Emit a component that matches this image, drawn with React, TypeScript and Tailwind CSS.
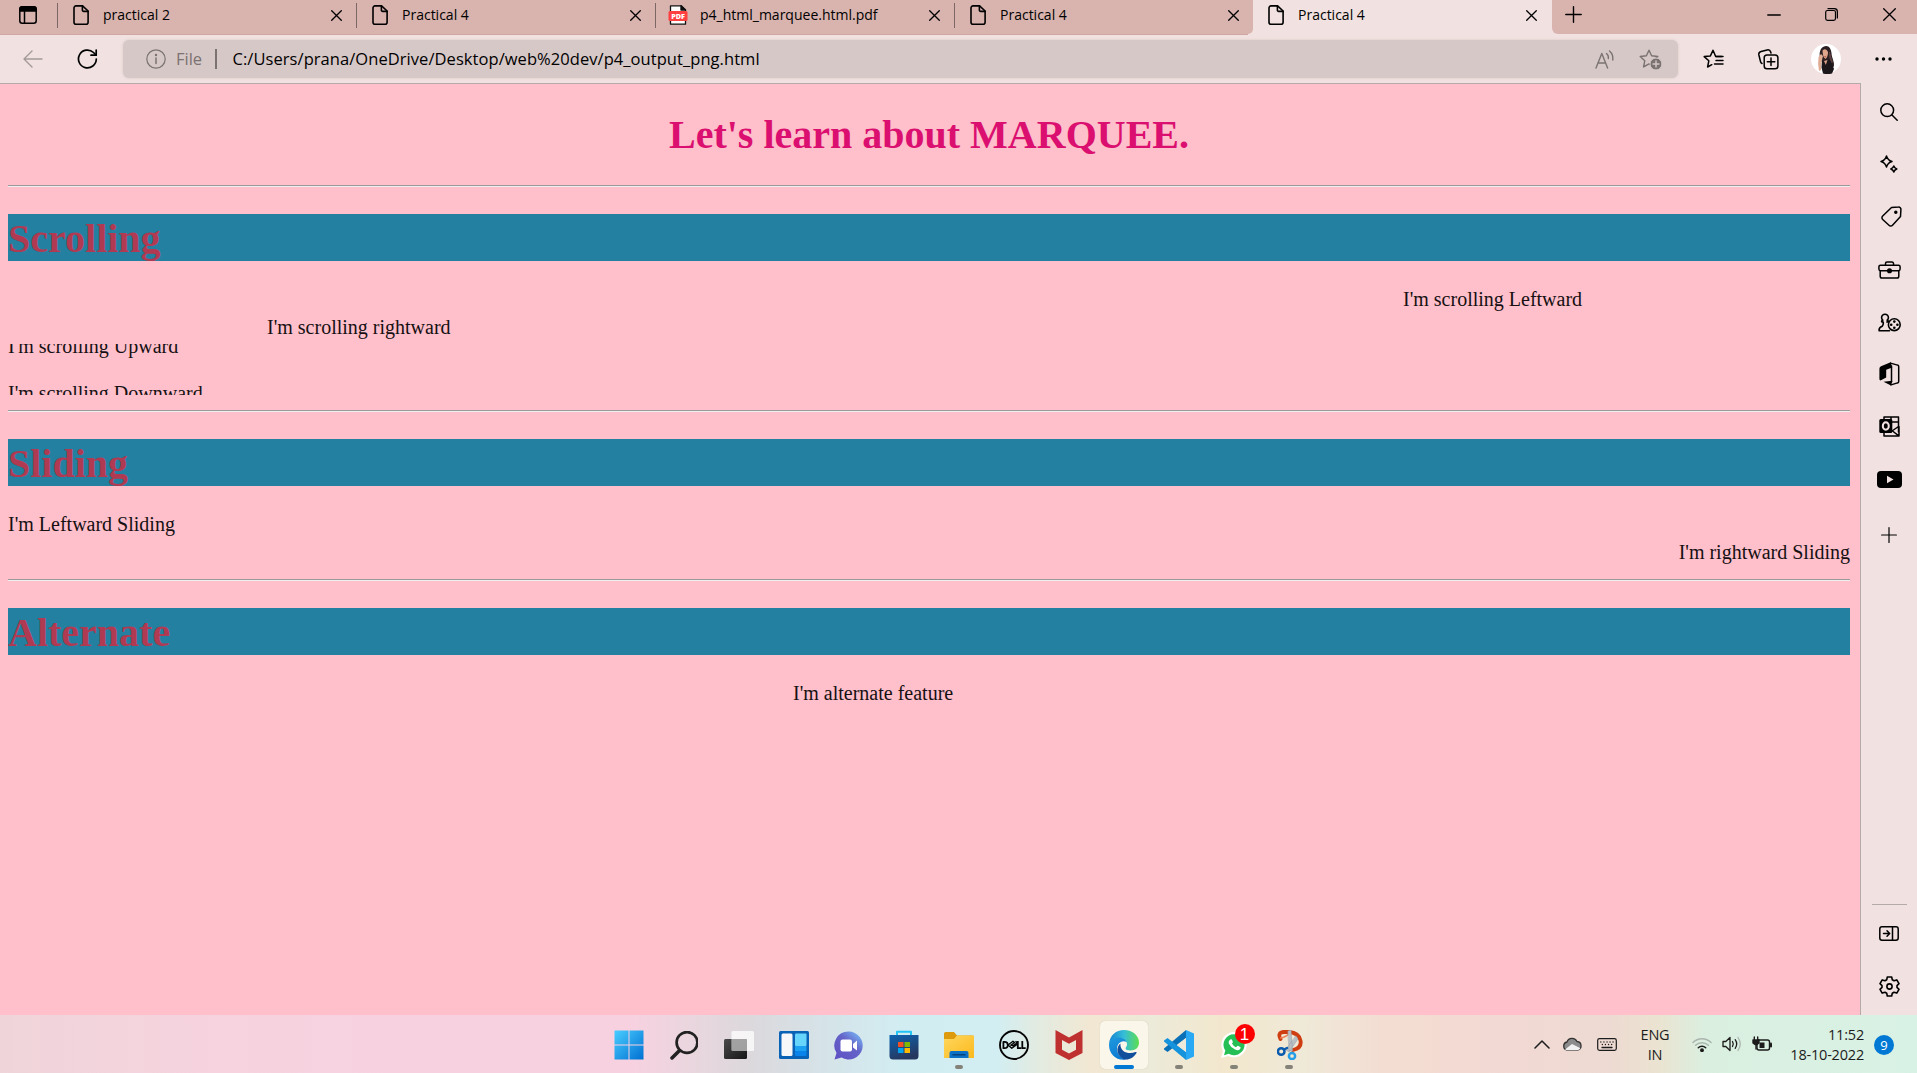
import type { ReactNode } from 'react';

function Svg({ w = 20, h, box, sw = 1.4, className = '', children }: { w?: number; h?: number; box?: string; sw?: number; className?: string; children: ReactNode }) {
  const hh = h ?? w;
  return (
    <svg width={w} height={hh} viewBox={box ?? `0 0 ${w} ${hh}`} fill="none" stroke="currentColor" strokeWidth={sw} strokeLinecap="round" strokeLinejoin="round" className={`block shrink-0 ${className}`}>
      {children}
    </svg>
  );
}

const DocIcon = () => (
  <Svg w={16} h={20} sw={1.6}>
    <path d="M3 .9h6.6L15.1 6v11.2a2 2 0 0 1-2 2H3a2 2 0 0 1-2-2V2.900a2 2 0 0 1 2-2z" />
    <path d="M9.400 1v4.200a1.200 1.200 0 0 0 1.200 1.200H15" />
  </Svg>
);

const PdfIcon = () => (
  <Svg w={20} h={20}>
    <path d="M2.500 .8h10.700L17.500 5v14.200h-15z" fill="#fff" stroke="#111" strokeWidth="1.300" />
    <path d="M13 .8V5h4.500z" fill="#111" stroke="#111" />
    <rect x="0.500" y="6" width="19" height="10" rx="1.500" fill="#ff4040" stroke="none" />
    <text x="10" y="13.900" fontSize="7.200" fontWeight="800" fill="#fff" stroke="none" textAnchor="middle" fontFamily="Open Sans, sans-serif">PDF</text>
  </Svg>
);

const Cross = ({ s = 11 }: { s?: number }) => (
  <Svg w={s} sw={1.3}>
    <path d={`M.7 .7L${s - 0.7} ${s - 0.7}M${s - 0.7} .7L.7 ${s - 0.7}`} />
  </Svg>
);

function Tab({ title, pdf, line }: { title: string; pdf?: boolean; line?: boolean }) {
  return (
    <div className="flex h-[35px] w-[299px] shrink-0 items-start">
      <div className={`mt-[5px] flex w-5 shrink-0 justify-center ${pdf ? 'ml-[12px]' : 'ml-[13px]'}`}>{pdf ? <PdfIcon /> : <DocIcon />}</div>
      <div className={`mt-[5px] h-5 grow whitespace-nowrap text-[14px] leading-5 ${pdf ? 'pl-[12px]' : 'pl-[12px]'}`}>{title}</div>
      <div className="mt-[10px]"><Cross /></div>
      <div className={`ml-[14px] mt-[3px] h-[25px] w-px shrink-0 ${line ? 'bg-[#7d6764]' : ''}`} />
    </div>
  );
}

function TabStrip() {
  return (
    <div className="flex h-[35px] border-b border-[#cfa8a3] bg-[#d9b3ae]">
      <div className="flex h-[34px] w-[58px] shrink-0 items-start justify-between">
        <Svg w={18} h={18} className="ml-[19px] mt-[6px]" sw={1.5}>
          <rect x=".8" y=".8" width="16.400" height="16.400" rx="2.500" />
          <path d="M1 5V3a2 2 0 0 1 2-2h12a2 2 0 0 1 2 2v2z" fill="currentColor" />
          <path d="M5.500 5v12" />
        </Svg>
        <div className="mt-[3px] h-[25px] w-px bg-[#7d6764]" />
      </div>
      <Tab title="practical 2" line />
      <Tab title="Practical 4" line />
      <Tab title="p4_html_marquee.html.pdf" pdf line />
      <div className="w-[293px] shrink-0"><Tab title="Practical 4" /></div>
      <div className="flex h-[35px] shrink-0 bg-[#f1e2e1]">
        <div className="h-[34px] w-[5px] rounded-br-md bg-[#d9b3ae]" />
        <div className="w-[299px]"><Tab title="Practical 4" /></div>
      </div>
      <div className="h-[35px] grow bg-[#f1e2e1]">
        <div className="flex h-[34px] items-start rounded-bl-md bg-[#d9b3ae] pl-[13px]">
          <Svg w={17} className="mt-[6px]"><path d="M8.500 .8v15.400M.8 8.500h15.400" /></Svg>
          <div className="grow" />
          <Svg w={14} h={2} className="mr-[44px] mt-[14px]"><path d="M.8 1h12.400" /></Svg>
          <Svg w={13} className="mr-[45px] mt-[8px]" sw={1.2}>
            <rect x=".7" y="2.500" width="9.800" height="9.800" rx="1.800" />
            <path d="M3 .7h6.500a3 3 0 0 1 2.900 3V10" />
          </Svg>
          <div className="mr-[21px] mt-[8px]"><Cross s={13} /></div>
        </div>
      </div>
    </div>
  );
}

const star = 'M10 1.200l2.600 5.600 6.200.7-4.600 4.200 1.200 6.200L10 14.900l-5.400 3 1.200-6.200L1.200 7.500l6.200-.7z';

function Toolbar() {
  return (
    <div className="flex h-[48px] items-center bg-[#f1e2e1]">
      <Svg w={20} h={18} className="ml-[23px] text-[#a39a99]"><path d="M9 1L1 9l8 8M1 9h18" /></Svg>
      <Svg w={21} h={20} className="ml-[34px]" sw={1.700}>
        <path d="M19.300 10a8.900 8.900 0 1 1-2.800-6.500L19 6" /><path d="M19.200 1v5.200H14" />
      </Svg>
      <div className="ml-[25px] flex h-[38px] w-[1555px] shrink-0 items-center rounded-[6px] bg-[#d6c8c7] shadow-[0_0_3px_#d6c8c7]">
        <Svg w={20} className="ml-[23px] text-[#7b7272]" sw={1.2}>
          <circle cx="10" cy="10" r="9.200" /><path d="M10 9v5.500" strokeWidth="1.500" /><circle cx="10" cy="6" r=".6" fill="currentColor" />
        </Svg>
        <span className="ml-[10px] w-[30px] whitespace-nowrap text-[16.500px] text-[#7b7272]">File</span>
        <div className="ml-[9px] h-[20px] w-[1.500px] bg-[#7b7272]" />
        <span className="ml-[16px] whitespace-nowrap text-[16.500px] tracking-[0.060px]">C:/Users/prana/OneDrive/Desktop/web%20dev/p4_output_png.html</span>
        <div className="grow" />
        <Svg w={20} h={19} className="mr-[24px] text-[#7b7272]" sw={1.400}>
          <path d="M1 18L6.800 3.500 12.600 18M3.200 13h7.200" /><path d="M11.500 3.500q2.400 2 1.800 5M14.500 1q4 3.500 3.300 9" />
        </Svg>
        <Svg w={23} h={21} className="mr-[16px] text-[#7b7272]" sw={1.400}>
          <path d={star} /><circle cx="17" cy="15" r="6" fill="currentColor" stroke="#d6c8c7" strokeWidth="1" /><path d="M17 12v6M14 15h6" stroke="#d6c8c7" />
        </Svg>
      </div>
      <Svg w={21} h={20} className="ml-[25px]" sw={1.500}>
        <path d="M18.500 7.500h-5.800L10 1.200 7.400 6.900l-6.200.7 4.600 4.200-1.200 6.200 4.200-2.300" /><path d="M13 11.500h7M11.500 15h8.500M13 7.600h7" />
      </Svg>
      <Svg w={21} className="ml-[34px]" sw={1.500}>
        <path d="M4 14.500a3 3 0 0 1-1.500-2L.9 6a3 3 0 0 1 2.200-3.500l6-1.500A3 3 0 0 1 12.700 3l.3 1" /><rect x="6.200" y="6" width="13.700" height="13.700" rx="2.800" /><path d="M13 9v7.500M9.300 12.800h7.500" />
      </Svg>
      <Svg w={30} className="ml-[32px]">
        <circle cx="15" cy="15" r="15" fill="#fff" stroke="none" />
        <g stroke="none">
          <path d="M9 14c-1-5 0-9 3-11 5-3 8 1 8.500 6 0 5 4 10 2 14l-9 1z" fill="#2b1f21" />
          <path d="M11.500 6.500q3.500-3 5.500 1.500 0 5-2.500 7-3-2-3-8.500z" fill="#e0a68c" />
          <path d="M7.500 13l2.500-3 2 2-1.500 6-.5 8-2 1q-1.500-7-.5-14z" fill="#e0ab93" />
          <path d="M11 17l3 1 5-3 4 10-2 4.500q-5 1-9 0l-1.500-6z" fill="#1b171b" />
          <path d="M13 17l1.800 4 1.700-5z" fill="#dba087" />
          <path d="M13 12q1.500 1 2.500-.5l-.7 1.700h-1z" fill="#a9453f" />
          <path d="M18 8q-.5 6 2.500 11l1.500-1q-2-5-3-10z" fill="#5b3f40" />
        </g>
      </Svg>
      <Svg w={17} h={4} className="ml-[34px]"><g fill="currentColor" stroke="none"><circle cx="2" cy="2" r="1.700" /><circle cx="8.500" cy="2" r="1.700" /><circle cx="15" cy="2" r="1.700" /></g></Svg>
    </div>
  );
}

function Heading({ children }: { children: ReactNode }) {
  return <h1 className="mt-[27px] h-[47px] bg-[#2380a1] text-[40px] font-bold leading-[49px] text-[#b03a52]">{children}</h1>;
}

const Rule = ({ mt }: { mt: string }) => <div className={`${mt} h-[2px] border-b border-t border-b-[#eeeeee] border-t-[#9a9a9a]`} />;

function Page() {
  return (
    <main className="h-full w-[1861px] shrink-0 border-r border-t border-[#b5aaaa] bg-[#ffbfcb] pl-2 pr-[10px] font-['Liberation_Serif',serif] text-[20px] text-[#151012]">
      <h1 className="mt-[27px] h-[47px] text-center text-[40px] font-bold leading-[47px] text-[#db0f70]">Let's learn about MARQUEE.</h1>
      <Rule mt="mt-[27px]" />
      <Heading>Scrolling</Heading>
      <div className="mt-[27px] h-[28px] pl-[1395px] leading-[22px]">I'm scrolling Leftward</div>
      <div className="h-[28px] pl-[259px] leading-[22px]">I'm scrolling rightward</div>
      <div className="h-[26px] overflow-hidden"><div className="-mt-[9px] leading-[22px]">I'm scrolling Upward</div></div>
      <div className="h-[25px] overflow-hidden"><div className="mt-[11px] leading-6">I'm scrolling Downward</div></div>
      <Rule mt="mt-[15px]" />
      <Heading>Sliding</Heading>
      <div className="mt-[27px] h-[28px] leading-[22px]">I'm Leftward Sliding</div>
      <div className="h-[28px] text-right leading-[22px]">I'm rightward Sliding</div>
      <Rule mt="mt-[10px]" />
      <Heading>Alternate</Heading>
      <div className="mt-[27px] h-[28px] pl-[785px] leading-[22px]">I'm alternate feature</div>
    </main>
  );
}

function Side({ h, children }: { h: string; children: ReactNode }) {
  return <div className={`flex shrink-0 items-center justify-center ${h}`}>{children}</div>;
}

function Sidebar() {
  return (
    <aside className="flex grow flex-col bg-[#f1e2e1] pt-[2px]">
      <Side h="h-[53px]"><Svg w={18} sw={1.500}><circle cx="7.200" cy="7.200" r="6.400" /><path d="M12 12l5.200 5.200" /></Svg></Side>
      <Side h="h-[52px]">
        <Svg w={18} sw={1.500}><path d="M6.500 1q1.200 4.300 5.500 5.500-4.300 1.200-5.500 5.500Q5.300 7.700 1 6.500 5.300 5.300 6.500 1zM13.800 11q.7 2.300 3 3-2.300.7-3 3-.7-2.300-3-3 2.300-.7 3-3z" /></Svg>
      </Side>
      <Side h="h-[53px]">
        <Svg w={21} className="ml-[4px]" sw={1.500}><path d="M10.500 1.500l7-.4a2.200 2.200 0 0 1 2.400 2.400l-.4 7-8 8.700a2.400 2.400 0 0 1-3.500 0l-6.300-5.700a2.400 2.400 0 0 1 0-3.500z" /><circle cx="14.800" cy="6.300" r="1" fill="currentColor" /></Svg>
      </Side>
      <Side h="h-[53px]">
        <Svg w={23} h={18} sw={1.500}><path d="M7.500 4V2.500A1.500 1.500 0 0 1 9 1h5a1.500 1.500 0 0 1 1.500 1.500V4" /><rect x=".9" y="4.200" width="21.200" height="5.500" rx="1.600" /><path d="M2.200 10v5.200a1.800 1.800 0 0 0 1.800 1.800h15a1.800 1.800 0 0 0 1.800-1.800V10" /><circle cx="11.500" cy="9.700" r="1.800" fill="currentColor" /></Svg>
      </Side>
      <Side h="h-[52px]">
        <Svg w={23} h={19} sw={1.600}>
          <path d="M11.500 17.800H1.200q-.7-3 3-4.500 1.500-2 1-4.300H3.800q-.6-1.300 1-1.800a3.400 3.400 0 1 1 4.400 0q1.600.5 1 1.800H8.800" /><circle cx="16.300" cy="11.700" r="5.900" fill="#f1e2e1" />
          <g fill="currentColor" stroke="none"><circle cx="16.300" cy="8.600" r="1.300" /><circle cx="13.200" cy="11.700" r="1.300" /><circle cx="19.400" cy="11.700" r="1.300" /><circle cx="16.300" cy="14.800" r="1.300" /></g>
        </Svg>
      </Side>
      <Side h="h-[52px]">
        <Svg w={21} h={24} sw={1.500}>
          <path d="M11.700.2l1.500 5.300-6 2.300v7.700L1.500 18.500Q.4 18.300.4 17V6.800Q.4 5 2 4.300z" fill="currentColor" stroke="none" /><path d="M4.500 19.800l6.500-.7h2.500l-1.500 4.500z" fill="currentColor" stroke="none" /><path d="M11.500 1.100l7 2a1.500 1.500 0 0 1 1.200 1.500v14.800a1.500 1.500 0 0 1-1.200 1.500l-6.500 2M12.500 4v15" />
        </Svg>
      </Side>
      <Side h="h-[53px]">
        <Svg w={21} sw={1.500}>
          <path d="M5 3V.9h14.500V16M12 3.500v4M5 6h14M12 1v5M19.500 10.500L13 15M5 16v4h15v-9.500M13.500 15l6 4.700" /><rect x=".3" y="3" width="13" height="14" rx="1.500" fill="currentColor" stroke="none" /><ellipse cx="6.800" cy="10" rx="3" ry="3.700" fill="currentColor" stroke="#f1e2e1" strokeWidth="2" />
        </Svg>
      </Side>
      <Side h="h-[52px]"><Svg w={25} h={17}><rect width="25" height="17" rx="4" fill="#000" stroke="none" /><path d="M10 4.800l6.500 3.700-6.500 3.700z" fill="#f1e2e1" stroke="none" /></Svg></Side>
      <Side h="h-[60px]"><Svg w={16} className="-ml-px" sw={1.200}><path d="M8 .6v14.800M.6 8h14.800" /></Svg></Side>
      <div className="grow" />
      <div className="mx-auto h-px w-[35px] bg-[#b5aaaa]" />
      <Side h="h-[57px]"><Svg w={20} h={15} sw={1.500}><rect x=".8" y=".8" width="18.400" height="13.400" rx="2.200" /><path d="M13.500 1v13M4.500 7.500h6M8 4.800l2.700 2.700L8 10.200" /></Svg></Side>
      <div className="flex h-[53px] items-center justify-center pb-[5px]">
        <Svg w={21} sw={1.600}>
          <path d="M8.300 1h4.400l.6 2.800 1.700 1 2.800-.9 2.200 3.800-2 1.900v1.800l2 1.900-2.200 3.800-2.800-.9-1.700 1-.6 2.800H8.300l-.6-2.800-1.700-1-2.800.9L1 13.300l2-1.900V9.600L1 7.700l2.200-3.800 2.800.9 1.700-1z" /><circle cx="10.500" cy="10.500" r="2.600" />
        </Svg>
      </div>
    </aside>
  );
}

function TaskItem({ children, dot, active }: { children: ReactNode; dot?: boolean; active?: boolean }) {
  return (
    <div className="flex h-[58px] w-[55px] shrink-0 flex-col items-center pt-[6px]">
      <div className={`flex h-[48px] w-[48px] flex-col items-center rounded-[5px] pt-[9px] ${active ? 'bg-[#fbf6ea] shadow-[0_0_1px_#bdb7a8]' : ''}`}>
        <div className="flex h-[30px] items-center">{children}</div>
        {active && <div className="mt-[5px] h-[4px] w-[20px] shrink-0 rounded-full bg-[#0078d4]" />}
        {dot && <div className="mt-[5px] h-[4px] w-[8px] shrink-0 rounded-full bg-[#858279]" />}
      </div>
    </div>
  );
}

function Taskbar() {
  return (
    <footer className="flex h-[58px] shrink-0 bg-[linear-gradient(90deg,#efd5da_0%,#f5d3de_9%,#f7d1e0_20%,#f7d1e0_33%,#ead6de_36%,#dcd8dc_39%,#d5e3e8_43%,#d2edf2_47%,#d2eef2_52%,#e2ebe2_54%,#f2e7d2_57%,#ecead9_60%,#f3e7cd_64%,#efe9d8_68%,#f3ddd2_72%,#f3d9d3_78%,#eddad2_84%,#ebe3d1_86.5%,#daefe0_89%,#d8f2e5_100%)] text-[#1c1c1c]">
      <div className="w-[601px] shrink-0" />
      <TaskItem>
        <Svg w={30}><defs><linearGradient id="win" x2="1" y2="1"><stop stopColor="#4acdff" /><stop offset="1" stopColor="#0070d2" /></linearGradient></defs><path d="M.5.500h14v14H.5zM15.500.500h14v14h-14zM.5 15.500h14v14H.5zM15.500 15.500h14v14h-14z" fill="url(#win)" stroke="none" /></Svg>
      </TaskItem>
      <TaskItem><Svg w={28} h={29} className="ml-px"><circle cx="17" cy="11.500" r="10.400" stroke="#222" strokeWidth="2.700" /><path d="M9.500 19.500L2 27" stroke="#222" strokeWidth="3.500" /></Svg></TaskItem>
      <TaskItem>
        <Svg w={30}><defs><linearGradient id="tv" x2="1" y2="1"><stop stopColor="#4a4a4a" /><stop offset="1" stopColor="#161616" /></linearGradient></defs><g stroke="none"><rect y="9" width="23" height="20" rx="1.500" fill="url(#tv)" /><rect x="7.500" y="1" width="22.500" height="20" rx="1.500" fill="#fff" opacity=".75" /><rect x="7.500" y="9" width="15.500" height="12" fill="#777" opacity=".5" /></g></Svg>
      </TaskItem>
      <TaskItem>
        <Svg w={30}><g stroke="none"><rect y="1" width="30" height="28" rx="1.500" fill="#0a62b6" /><rect x="2.500" y="3.500" width="11" height="22.500" rx="1.500" fill="#f7f7f9" /><rect x="16" y="3.500" width="11.500" height="12.500" rx="1" fill="#67d5fb" /><rect x="16" y="16" width="11.500" height="5" fill="#1ba0f2" /><rect x="16" y="21" width="11.500" height="5" rx="1" fill="#0a84ea" /></g></Svg>
      </TaskItem>
      <TaskItem>
        <Svg w={29}><defs><linearGradient id="chat" x1=".1" x2=".9" y1="1" y2=".1"><stop stopColor="#6050c4" /><stop offset=".6" stopColor="#6463c8" /><stop offset="1" stopColor="#77b0f2" /></linearGradient></defs><g stroke="none"><path d="M14.500.500a14 14 0 1 1-7 26L.5 28.500 2.500 22A14 14 0 0 1 14.500.500z" fill="url(#chat)" /><rect x="6.500" y="8.500" width="11.500" height="12" rx="2" fill="#fff" /><path d="M19 13l4-3.500v10L19 16.500z" fill="#fff" /></g></Svg>
      </TaskItem>
      <TaskItem>
        <Svg w={30}><defs><linearGradient id="store" y2="1" x2=".4"><stop stopColor="#0d64b2" /><stop offset="1" stopColor="#26375f" /></linearGradient></defs><path d="M8 6V1.800h14V6" stroke="#21c4f5" strokeWidth="2" /><path d="M.5 5h29v21a3.500 3.500 0 0 1-3.500 3.500H4A3.500 3.500 0 0 1 .5 26z" fill="url(#store)" stroke="none" /><g stroke="none"><path d="M9 12h5.500v5H9z" fill="#f25022" /><path d="M15.500 12H21v5h-5.500z" fill="#7fba00" /><path d="M9 18h5.500v5H9z" fill="#00a4ef" /><path d="M15.500 18H21v5h-5.500z" fill="#ffb900" /></g></Svg>
      </TaskItem>
      <TaskItem dot>
        <Svg w={30}><defs><linearGradient id="fold" x2="1" y2="1"><stop stopColor="#ffd75e" /><stop offset="1" stopColor="#fbb91d" /></linearGradient></defs><g stroke="none"><path d="M0 3.500Q0 2 1.500 2H10l3 3.500h15.500Q30 5.500 30 7v6H0z" fill="#dc9a0c" /><path d="M0 9h10l3-3.500h17V28H0z" fill="url(#fold)" /><path d="M5.500 28v-5q0-2 2-2h15q2 0 2 2v5z" fill="#0c70c7" /><rect x="8.500" y="24" width="13" height="1.500" fill="#06427d" /></g></Svg>
      </TaskItem>
      <TaskItem>
        <Svg w={30}><circle cx="15" cy="15" r="14" strokeWidth="1.900" stroke="#050505" /><g stroke="#050505" strokeWidth="1.800" strokeLinecap="butt"><path d="M4.400 11.800v6.400h1.100q3.300 0 3.300-3.200t-3.300-3.200zM18.800 11v7.200h3.400M23.300 11v7.200h3.400" /><path d="M9 15l5-3.700 1.600 1.200-4.200 3.100M9 15l3.800 3.300 5.500-4.100M12.500 14.700l1.500 1.200 4.200-3.100-1.700-1.500" strokeWidth="1.400" /></g></Svg>
      </TaskItem>
      <TaskItem><Svg w={28} h={30}><path d="M.5 0L14 7.500 27.500 0v23L14 30 .5 23zM7 10v9.800l7 3.700 7-3.700V10l-7 3.800z" fill="#bf3030" fillRule="evenodd" stroke="none" /></Svg></TaskItem>
      <TaskItem active>
        <Svg w={30}>
          <defs>
            <linearGradient id="eTop" x1="0" y1=".5" x2="1" y2=".5"><stop stopColor="#1783cf" /><stop offset=".5" stopColor="#35bdd8" /><stop offset="1" stopColor="#5ede4e" /></linearGradient>
            <linearGradient id="eLeft" x2=".4" y2="1"><stop stopColor="#1f9ade" /><stop offset="1" stopColor="#0d7bd2" /></linearGradient>
          </defs>
          <g stroke="none">
            <path d="M0 14C1 5 7 0 15 0c9 0 15 6 15 12.500 0 5-3.500 8-8.500 8-3 0-5-1-5-2.300 0-1 1.500-1.500 1.500-4C18 10.500 14 8 9 8c-4.500 0-8 2.500-9 6z" fill="url(#eTop)" />
            <path d="M0 15C0 10 4 7.500 9 7.500c4 0 7.500 1.500 8.700 4.500C12 9.500 8 14 8 19c0 5 4 9.500 9 10.700C7 31 0 24 0 15z" fill="url(#eLeft)" />
            <path d="M11.500 13.500C7 17 7 25 14 29c5 2 11-1.500 13.500-6 .5-1-.3-1.300-1-1-7 3-16-.3-15-8.500z" fill="#114f9c" />
          </g>
        </Svg>
      </TaskItem>
      <TaskItem dot>
        <Svg w={30}><g stroke="none"><path d="M22 0v8L3.500 22 0 19.500v-1z" fill="#0a70b8" /><path d="M22 30v-8L3.500 8 0 10.500v1z" fill="#1593dc" /><path d="M22 0l8 3.500v23L22 30z" fill="#29a9f3" /><path d="M22 8v14l-9-7z" fill="#eee9da" /></g></Svg>
      </TaskItem>
      <TaskItem dot>
        <div className="relative">
          <Svg w={28} h={28}><path d="M14 1a12.700 12.700 0 1 1-5.800 24L1 27l2-7A12.700 12.700 0 0 1 14 1z" fill="#fff" stroke="none" /><path d="M14 3.200a10.500 10.500 0 1 1-5.200 19.600L4 24.200l1.300-4.700A10.500 10.500 0 0 1 14 3.200z" fill="#25bf55" stroke="none" /><path d="M10.200 8.500q1.500-.8 2 .8l.6 1.500q.2.800-.8 1.700 1.200 2.500 4 3.700l1.300-1.300q.5-.4 1 0l2 1q.8.600-.2 2-1.700 2.200-5 .6-4.500-2-6.300-6-.8-2.500 1.400-4z" fill="#fff" stroke="none" /></Svg>
          <div className="absolute -top-[7px] left-[15px] flex h-5 w-5 items-center justify-center rounded-full bg-[#fe0000] font-['Liberation_Sans',sans-serif] text-[17px] leading-none text-white">1</div>
        </div>
      </TaskItem>
      <TaskItem dot>
        <Svg w={26} h={30} className="ml-[2px]">
          <path d="M3.500 9Q0 2.500 7 2h5q10 1 11.500 8.500Q25 18 16 20" stroke="#cf3d10" strokeWidth="3.800" /><path d="M3.500 8q5-.5 9-5" stroke="#ef8054" strokeWidth="1.300" />
          <path d="M11 1l3-1 1.500 21h-3zM19 6l2 3-9 13-3-2z" fill="#b8bfc5" stroke="#929ba2" strokeWidth=".5" />
          <circle cx="4.200" cy="21.500" r="3.300" stroke="#0a5aae" strokeWidth="2.500" /><circle cx="15" cy="26" r="3.100" stroke="#249ee6" strokeWidth="2.500" /><path d="M7 19.500l3-1.500" stroke="#0a5aae" strokeWidth="2.500" />
        </Svg>
      </TaskItem>
      <div className="grow" />
      <div className="flex h-[58px] w-[383px] shrink-0 items-center">
        <Svg w={16} h={9} sw={1.500}><path d="M1 8l7-7 7 7" /></Svg>
        <Svg w={20} h={14} className="ml-[12px]" sw={1.300}><path d="M5 13.200a4.200 4.200 0 0 1 0-8.200A5.400 5.400 0 0 1 15 4.500a4.400 4.400 0 0 1 .5 8.700z" fill="#8c8c8c" stroke="#333" /><path d="M3 12.500l7-5.500 8.500 4.300q-1 1.700-3 1.900H5z" fill="#f1f1f1" stroke="none" /></Svg>
        <Svg w={20} h={13} className="ml-[15px]" sw={1.200}><rect x=".7" y=".7" width="18.600" height="11.600" rx="1.800" /><path d="M3.800 4h.1M6.900 4h.1M10 4h.1M13 4h.1M16 4h.1M5.300 6.500h.1M8.400 6.500h.1M11.500 6.500h.1M14.600 6.500h.1M5 9.500h10" strokeWidth="1.300" /></Svg>
        <div className="ml-[18px] mt-[2px] w-[40px] text-center text-[14.500px] leading-5 tracking-[-0.2px]">ENG<br />IN</div>
        <Svg w={20} h={15} className="ml-[17px]" sw={1.500}><path d="M1 5.500a12.700 12.700 0 0 1 18 0M3.600 8.300a9 9 0 0 1 12.800 0" stroke="#a9b5ad" /><path d="M6.300 10.700a5.300 5.300 0 0 1 7.400 0" /><circle cx="10" cy="13.200" r="1.200" fill="currentColor" /></Svg>
        <Svg w={20} h={16} className="ml-[10px]" sw={1.300}><path d="M1 5.500h2.800L8 1.500v13l-4.200-4H1z" /><path d="M10.500 5.500q1.500 2.500 0 5M13.200 3.700q3 4.300 0 8.600" /><path d="M16 1.500q4.500 6.500 0 13" stroke="#a9b5ad" /></Svg>
        <Svg w={20} h={16} className="ml-[10px]" sw={1.400}><rect x="5" y="4" width="12.500" height="10" rx="2" /><path d="M19 7.500v3" strokeWidth="2" /><rect x="7.500" y="6.500" width="5" height="5.500" fill="currentColor" stroke="none" /><path d="M1 4h6v3L5 8.500H3L1 7z" fill="currentColor" /><path d="M2.300 1v3M5.700 1v3M4 8v5" /></Svg>
        <div className="mt-[2px] w-[92px] whitespace-nowrap text-right text-[14.500px] leading-5 tracking-[-0.200px]">11:52<br />18-10-2022</div>
        <div className="ml-[10px] mt-[2px] flex h-5 w-5 items-center justify-center rounded-full bg-[#0078d4] text-[13px] leading-none text-white">9</div>
      </div>
    </footer>
  );
}

export default function App() {
  return (
    <div className="flex h-[1073px] w-[1917px] flex-col overflow-hidden bg-[#f1e2e1] font-['Open_Sans','Noto_Sans',sans-serif] text-black">
      <TabStrip />
      <Toolbar />
      <div className="flex h-[932px] shrink-0">
        <Page />
        <Sidebar />
      </div>
      <Taskbar />
    </div>
  );
}
